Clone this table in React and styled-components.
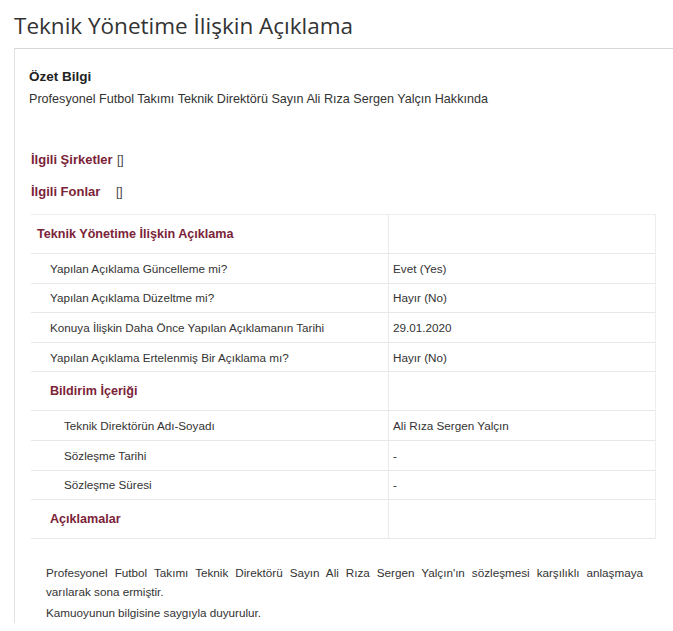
import React from 'react'
import styled, { createGlobalStyle } from 'styled-components'

const GlobalStyle = createGlobalStyle`
  body {
    margin: 0;
    background: #fff;
    font-family: "Liberation Sans", Arial, sans-serif;
    color: #333;
  }
`

const Page = styled.div`
  width: 673px;
  height: 631px;
  overflow: hidden;
`

const Title = styled.h1`
  font-family: "Open Sans", "Noto Sans", sans-serif;
  font-weight: 400;
  font-size: 22.5px;
  line-height: 30px;
  color: #333;
  margin: 0;
  padding: 11px 0 0 14px;
  height: 37px;
`

const Panel = styled.div`
  margin-left: 14px;
  border-top: 1px solid #d8d8d8;
  border-left: 1px solid #e2e2e2;
  padding: 19px 0 0 14px;
`

const SummaryTitle = styled.div`
  font-weight: 700;
  font-size: 13.5px;
  line-height: 18px;
  color: #222;
`

const SummaryText = styled.div`
  font-size: 12.6px;
  line-height: 18px;
  margin-top: 4px;
  color: #333;
`

const Related = styled.div`
  display: flex;
  align-items: baseline;
  margin-left: 2px;
  margin-top: ${({ $top }) => $top}px;
  font-size: 13px;
  line-height: 18px;
`

const RelatedLabel = styled.span`
  color: #7b2338;
  font-weight: 700;
  width: ${({ $w }) => $w}px;
`

const Brackets = styled.span`
  color: #444;
  font-size: 12px;
`

const Table = styled.div`
  margin: 13px 0 0 2px;
  width: 624px;
  border-top: 1px solid #eee;
  border-right: 1px solid #eee;
`

const Row = styled.div`
  box-sizing: border-box;
  display: grid;
  grid-template-columns: 358px 1fr;
  border-bottom: 1px solid #e8e8e8;
  height: ${({ $h }) => $h}px;
`

const Label = styled.div`
  display: flex;
  align-items: center;
  padding-left: ${({ $indent }) => $indent}px;
  font-size: 11.7px;
  color: #333;
  border-right: 1px solid #eaeaea;
`

const HeadLabel = styled(Label)`
  font-size: 12.6px;
  font-weight: 700;
  color: #7b2338;
`

const Value = styled.div`
  display: flex;
  align-items: center;
  padding-left: 4px;
  font-size: 11.7px;
  color: #333;
`

const Footer = styled.div`
  width: 597px;
  margin: 25px 0 0 17px;
  font-size: 11.7px;
  line-height: 18.5px;
  color: #333;
  text-align: justify;

  p {
    margin: 0 0 3px;
  }
`

const rows = [
  { type: 'head', label: 'Teknik Yönetime İlişkin Açıklama', indent: 6 },
  { label: 'Yapılan Açıklama Güncelleme mi?', value: 'Evet (Yes)', indent: 19 },
  { label: 'Yapılan Açıklama Düzeltme mi?', value: 'Hayır (No)', indent: 19 },
  { label: 'Konuya İlişkin Daha Önce Yapılan Açıklamanın Tarihi', value: '29.01.2020', indent: 19 },
  { label: 'Yapılan Açıklama Ertelenmiş Bir Açıklama mı?', value: 'Hayır (No)', indent: 19 },
  { type: 'head', label: 'Bildirim İçeriği', indent: 19 },
  { label: 'Teknik Direktörün Adı-Soyadı', value: 'Ali Rıza Sergen Yalçın', indent: 33 },
  { label: 'Sözleşme Tarihi', value: '-', indent: 33 },
  { label: 'Sözleşme Süresi', value: '-', indent: 33 },
  { type: 'head', label: 'Açıklamalar', indent: 19 },
]

const App = () => {
  return (
    <Page>
      <GlobalStyle />
      <Title>Teknik Yönetime İlişkin Açıklama</Title>
      <Panel>
        <SummaryTitle>Özet Bilgi</SummaryTitle>
        <SummaryText>
          Profesyonel Futbol Takımı Teknik Direktörü Sayın Ali Rıza Sergen Yalçın Hakkında
        </SummaryText>
        <Related $top={43}>
          <RelatedLabel $w={86}>İlgili Şirketler</RelatedLabel>
          <Brackets>[]</Brackets>
        </Related>
        <Related $top={14}>
          <RelatedLabel $w={85}>İlgili Fonlar</RelatedLabel>
          <Brackets>[]</Brackets>
        </Related>
        <Table>
          {rows.map((r) =>
            r.type === 'head' ? (
              <Row key={r.label} $h={39}>
                <HeadLabel $indent={r.indent}>{r.label}</HeadLabel>
                <Value />
              </Row>
            ) : (
              <Row key={r.label} $h={29.6}>
                <Label $indent={r.indent}>{r.label}</Label>
                <Value>{r.value}</Value>
              </Row>
            )
          )}
        </Table>
        <Footer>
          <p>
            Profesyonel Futbol Takımı Teknik Direktörü Sayın Ali Rıza Sergen Yalçın'ın sözleşmesi karşılıklı anlaşmaya varılarak sona ermiştir.
          </p>
          <p>Kamuoyunun bilgisine saygıyla duyurulur.</p>
        </Footer>
      </Panel>
    </Page>
  )
}

export default App
